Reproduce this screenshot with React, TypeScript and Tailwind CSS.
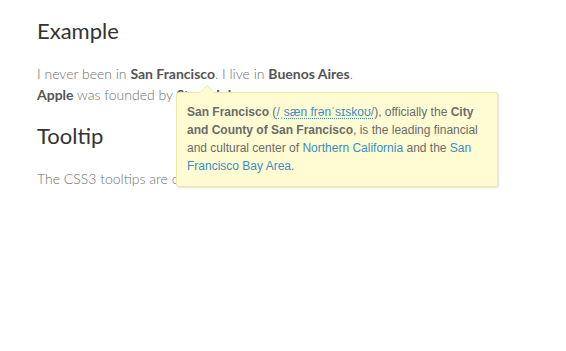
import React from 'react';

const App: React.FC = () => {
  return (
    <div className="relative w-[566px] h-[351px] bg-white font-['Lato',sans-serif] text-[#707070]">
      <div className="pl-[37px] pt-[16px]">
        <h2 className="text-[22px] leading-[30px] font-normal text-[#333]">Example</h2>
        <p className="mt-[17px] text-[14px] leading-[21px] font-light">
          I never been in <b className="font-bold text-[#555]">San Francisco</b>. I live in <b className="font-bold text-[#555]">Buenos Aires</b>.
          <br />
          <b className="font-bold text-[#555]">Apple</b> was founded by <span className="font-bold text-[#555]">Steve Jobs</span>.
        </p>
        <h2 className="mt-[16px] text-[22px] leading-[30px] font-normal text-[#333]">Tooltip</h2>
        <p className="mt-[17px] text-[14px] leading-[21px] font-light">
          The CSS3 tooltips are created with pseudo elements.
        </p>
      </div>

      {/* tooltip over Steve Jobs */}
      <div className="absolute left-[176px] top-[92px] w-[322px] rounded-[3px] border border-[#f0e6a8] bg-[#fffbd2] px-[10px] pt-[10px] pb-[11px] shadow-[1px_1px_2px_rgba(0,0,0,0.12)] font-['Liberation_Sans',Arial,sans-serif] text-[12px] leading-[18px] text-[#6b6b6b]">
        <div className="absolute -top-[8px] left-[22px] h-0 w-0 border-x-[8px] border-b-[8px] border-x-transparent border-b-[#f0e6a8]" />
        <div className="absolute -top-[7px] left-[23px] h-0 w-0 border-x-[7px] border-b-[7px] border-x-transparent border-b-[#fffbd2]" />
        <b className="font-bold">San Francisco</b> (<span className="text-[#3a8ec4] underline decoration-dotted underline-offset-2">/ˌsæn frənˈsɪskoʊ/</span>), officially the <b className="font-bold">City and County of San Francisco</b>, is the leading financial and cultural center of <span className="text-[#3a8ec4]">Northern California</span> and the <span className="text-[#3a8ec4]">San Francisco Bay Area</span>.
      </div>
    </div>
  );
};

export default App;
